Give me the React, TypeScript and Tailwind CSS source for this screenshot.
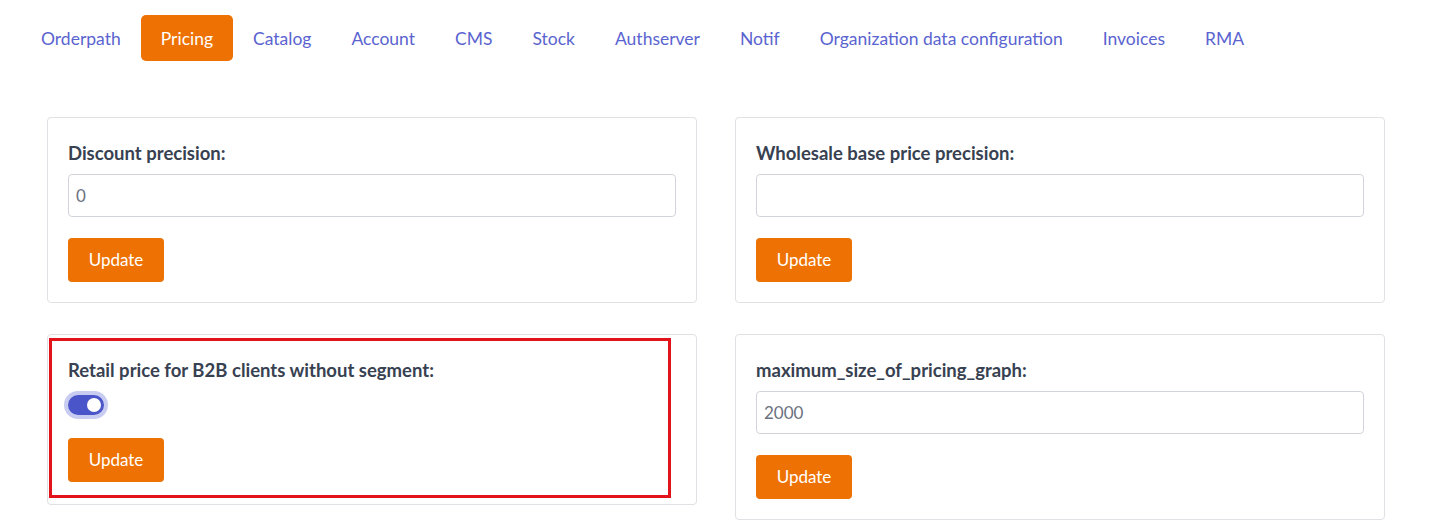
import { useState } from 'react';

const tabs = [
	'Orderpath',
	'Pricing',
	'Catalog',
	'Account',
	'CMS',
	'Stock',
	'Authserver',
	'Notif',
	'Organization data configuration',
	'Invoices',
	'RMA'
];

const UpdateButton = () => (
	<button
		type="button"
		className="h-[44px] w-[96px] rounded-[4px] bg-[#ee7203] text-[17px] text-white"
	>
		Update
	</button>
);

const InputCard = ({ label, value }: { label: string; value: string }) => (
	<div className="flex flex-col items-start rounded-[4px] border border-[#dfe1e5] bg-white px-5 pb-[20px] pt-[23px]">
		<label className="mb-[9px] text-[18.5px] font-bold leading-6 text-[#374151]">
			{label}
		</label>
		<input
			defaultValue={value}
			className="mb-[21px] h-[43px] w-full rounded-[4px] border border-[#d1d5db] px-[7px] text-[17px] text-[#6b7280] outline-none"
		/>
		<UpdateButton />
	</div>
);

const ToggleCard = ({ label }: { label: string }) => {
	const [on, setOn] = useState(true);
	return (
		<div className="relative flex flex-col items-start self-start rounded-[4px] border border-[#dfe1e5] bg-white px-5 pb-[22px] pt-[23px]">
			<label className="mb-[13px] text-[18.5px] font-bold leading-6 text-[#374151]">
				{label}
			</label>
			<button
				type="button"
				onClick={() => setOn(!on)}
				className={`mb-[23px] flex h-[20px] w-[36px] items-center rounded-full px-[3px] ring-4 ring-[#c9ccf1] ${
					on ? 'justify-end bg-[#4a55c9]' : 'justify-start bg-[#d1d5db]'
				}`}
			>
				<span className="h-[14px] w-[14px] rounded-full bg-white" />
			</button>
			<UpdateButton />
			{/* red annotation frame */}
			<div className="pointer-events-none absolute left-[1px] top-[3px] h-[160px] w-[622px] border-[3px] border-[#e3131b]" />
		</div>
	);
};

export default function App() {
	const [active, setActive] = useState('Pricing');
	return (
		<div className="min-h-[528px] bg-white font-['Lato',sans-serif]">
			<nav className="flex items-center pl-[21px] pt-[15px]">
				{tabs.map((tab) => (
					<button
						key={tab}
						type="button"
						onClick={() => setActive(tab)}
						className={`h-[46px] rounded-[5px] px-5 pt-[2px] text-[17.5px] ${
							active === tab ? 'bg-[#ee7203] text-white' : 'text-[#5a64d0]'
						}`}
					>
						{tab}
					</button>
				))}
			</nav>
			<div className="ml-[47px] mt-[56px] grid w-[1338px] grid-cols-2 items-start gap-x-[38px] gap-y-[31px]">
				<InputCard label="Discount precision:" value="0" />
				<InputCard label="Wholesale base price precision:" value="" />
				<ToggleCard label="Retail price for B2B clients without segment:" />
				<InputCard label="maximum_size_of_pricing_graph:" value="2000" />
			</div>
		</div>
	);
}
